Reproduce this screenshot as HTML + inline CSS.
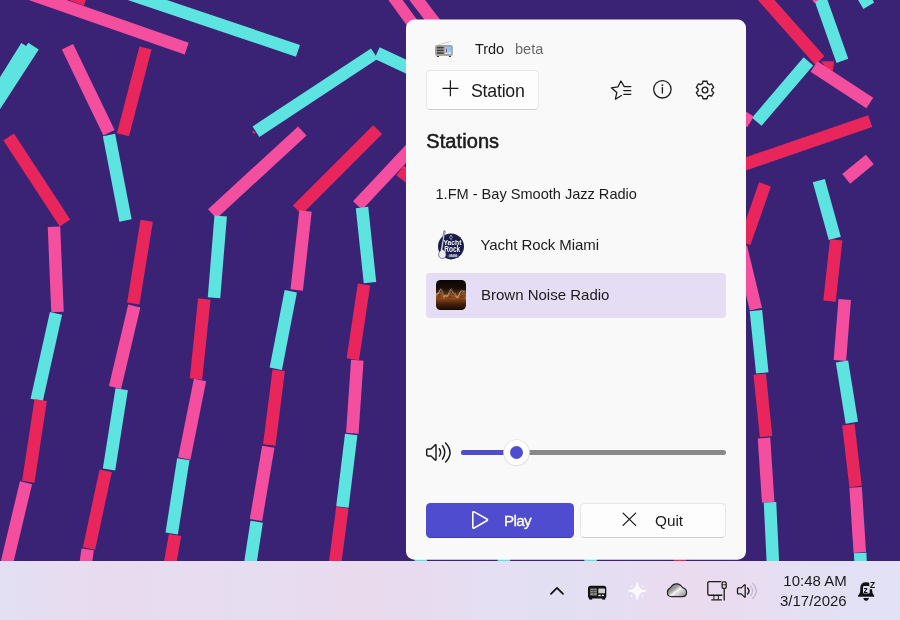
<!DOCTYPE html>
<html><head><meta charset="utf-8"><title>Trdo</title>
<style>
html,body{margin:0;padding:0;}
body{width:900px;height:620px;overflow:hidden;position:relative;background:#3a2375;font-family:"Liberation Sans",sans-serif;color:#1b1b1b;}
#bg{position:absolute;left:0;top:0;}
#panel{position:absolute;left:406px;top:20px;width:340px;height:540px;border-radius:8px;background:#f9f9f9;}
.t{position:absolute;white-space:nowrap;line-height:20px;}
#ui{position:absolute;left:0;top:0;width:900px;height:620px;will-change:transform;}
.btn{position:absolute;box-sizing:border-box;border-radius:4.5px;}
.btn.w{background:#fdfdfd;border:1px solid #e6e6e6;border-bottom-color:#d0d0d0;}
#taskbar{position:absolute;left:0;top:561px;width:900px;height:59px;background:linear-gradient(90deg,#e3e0f3 0px,#e4def2 25px,#e9dbef 100px,#e7dcf0 200px,#e6ddf1 250px,#eadaee 350px,#e8dbef 420px,#e4dff2 480px,#e3dff3 560px,#e5def2 620px,#ebdbef 680px,#e9dcf0 740px,#e4e0f4 800px,#e2e1f5 900px);}
svg{position:absolute;overflow:visible;}
</style></head><body>
<svg id="bg" width="900" height="620" viewBox="0 0 900 620">
<rect width="900" height="620" fill="#3a2375"/>
<line x1="55" y1="-12" x2="86" y2="0" stroke="#e8265b" stroke-width="12.5"/>
<line x1="19" y1="-10" x2="186.7" y2="48.7" stroke="#f44e9f" stroke-width="12.5"/>
<line x1="117.6" y1="-10" x2="298" y2="50.8" stroke="#5de4e0" stroke-width="12.5"/>
<line x1="26.6" y1="46.3" x2="-10.3" y2="105.8" stroke="#5de4e0" stroke-width="12.5"/>
<line x1="33.5" y1="46.2" x2="-10" y2="113.2" stroke="#5de4e0" stroke-width="12.5"/>
<line x1="67.5" y1="46.7" x2="109" y2="132.7" stroke="#f44e9f" stroke-width="12.5"/>
<line x1="145.5" y1="48" x2="123" y2="134.7" stroke="#e8265b" stroke-width="12.5"/>
<line x1="109" y1="135" x2="125.5" y2="220.5" stroke="#5de4e0" stroke-width="12.5"/>
<line x1="8.7" y1="137" x2="65" y2="223" stroke="#e8265b" stroke-width="12.5"/>
<line x1="252.6" y1="131.2" x2="255" y2="133.2" stroke="#e8265b" stroke-width="2"/>
<line x1="256" y1="131.7" x2="374.4" y2="53.6" stroke="#5de4e0" stroke-width="12.5"/>
<line x1="377" y1="53" x2="425" y2="75.5" stroke="#5de4e0" stroke-width="12.5"/>
<line x1="212.3" y1="213.8" x2="302.3" y2="131" stroke="#f44e9f" stroke-width="12.5"/>
<line x1="386.8" y1="-12" x2="418.8" y2="32" stroke="#f44e9f" stroke-width="11.5"/>
<line x1="408" y1="-12" x2="442.5" y2="33" stroke="#f44e9f" stroke-width="12.5"/>
<line x1="54" y1="226.7" x2="57.5" y2="312" stroke="#f44e9f" stroke-width="12.5"/>
<line x1="56" y1="313.3" x2="36.7" y2="400" stroke="#5de4e0" stroke-width="12.5"/>
<line x1="40.7" y1="400" x2="28.3" y2="481.7" stroke="#e8265b" stroke-width="12.5"/>
<line x1="26" y1="482.7" x2="4" y2="575" stroke="#f44e9f" stroke-width="12.5"/>
<line x1="146.7" y1="220.7" x2="133.3" y2="303.5" stroke="#e8265b" stroke-width="12.5"/>
<line x1="134.3" y1="306" x2="115" y2="387.5" stroke="#f44e9f" stroke-width="12.5"/>
<line x1="121.7" y1="389.3" x2="109" y2="469.5" stroke="#5de4e0" stroke-width="12.5"/>
<line x1="105.7" y1="470.7" x2="89" y2="548.5" stroke="#e8265b" stroke-width="12.5"/>
<line x1="87.7" y1="549.3" x2="84" y2="575" stroke="#f44e9f" stroke-width="12.5"/>
<line x1="220.7" y1="216" x2="214" y2="297.7" stroke="#5de4e0" stroke-width="12.5"/>
<line x1="204.3" y1="299" x2="196" y2="379" stroke="#e8265b" stroke-width="12.5"/>
<line x1="200" y1="380" x2="184.3" y2="458.5" stroke="#f44e9f" stroke-width="12.5"/>
<line x1="183.3" y1="459.3" x2="171.7" y2="533.5" stroke="#5de4e0" stroke-width="12.5"/>
<line x1="175" y1="535" x2="168" y2="575" stroke="#e8265b" stroke-width="12.5"/>
<line x1="297.3" y1="210" x2="377.7" y2="129.7" stroke="#e8265b" stroke-width="12.5"/>
<line x1="305.5" y1="211" x2="296.7" y2="290" stroke="#f44e9f" stroke-width="12.5"/>
<line x1="290.8" y1="291.3" x2="275.8" y2="368.7" stroke="#5de4e0" stroke-width="12.5"/>
<line x1="278.7" y1="370.3" x2="269.3" y2="445" stroke="#e8265b" stroke-width="12.5"/>
<line x1="268.3" y1="446.7" x2="256" y2="520" stroke="#f44e9f" stroke-width="12.5"/>
<line x1="256.7" y1="521.7" x2="248.5" y2="575" stroke="#5de4e0" stroke-width="12.5"/>
<line x1="400" y1="170.5" x2="440" y2="199.6" stroke="#e8265b" stroke-width="12.5"/>
<line x1="357.6" y1="205.5" x2="420" y2="139" stroke="#f44e9f" stroke-width="12.5"/>
<line x1="362" y1="207.5" x2="370" y2="282.7" stroke="#5de4e0" stroke-width="12.5"/>
<line x1="364" y1="284.5" x2="352.8" y2="359.2" stroke="#e8265b" stroke-width="12.5"/>
<line x1="357.3" y1="360.3" x2="352.3" y2="433.3" stroke="#f44e9f" stroke-width="12.5"/>
<line x1="351.2" y1="434.5" x2="342.4" y2="507" stroke="#5de4e0" stroke-width="12.5"/>
<line x1="342.4" y1="507.6" x2="333.5" y2="575" stroke="#e8265b" stroke-width="12.5"/>
<line x1="756.4" y1="-11" x2="819.8" y2="60.5" stroke="#e8265b" stroke-width="12.5"/>
<polygon points="821,61.3 834,61.3 833,70.7 828,70" fill="#e8265b"/>
<line x1="820.5" y1="-1" x2="842.4" y2="60.8" stroke="#5de4e0" stroke-width="12.5"/>
<line x1="812" y1="-12" x2="819.5" y2="-0.5" stroke="#f44e9f" stroke-width="12.5"/>
<line x1="858.5" y1="-11.4" x2="868.8" y2="5.7" stroke="#5de4e0" stroke-width="12.5"/>
<line x1="808.4" y1="61.4" x2="756.8" y2="121.7" stroke="#5de4e0" stroke-width="12.5"/>
<line x1="814" y1="66.5" x2="869.8" y2="103.1" stroke="#f44e9f" stroke-width="12.5"/>
<line x1="725" y1="106" x2="750.5" y2="121.9" stroke="#f44e9f" stroke-width="12.5"/>
<line x1="725" y1="171" x2="870.2" y2="121.2" stroke="#e8265b" stroke-width="12.5"/>
<line x1="846.2" y1="178.8" x2="869.8" y2="159.5" stroke="#f44e9f" stroke-width="12.5"/>
<line x1="765" y1="184.4" x2="744.5" y2="243" stroke="#e8265b" stroke-width="12.5"/>
<line x1="741" y1="247" x2="755.9" y2="309.1" stroke="#f44e9f" stroke-width="12.5"/>
<line x1="818.8" y1="180.7" x2="834.8" y2="238.3" stroke="#5de4e0" stroke-width="12.5"/>
<line x1="836.2" y1="239.9" x2="829.5" y2="301.1" stroke="#e8265b" stroke-width="12.5"/>
<line x1="844.7" y1="299.5" x2="839.9" y2="360.4" stroke="#f44e9f" stroke-width="12.5"/>
<line x1="842" y1="361.6" x2="851.8" y2="422.7" stroke="#5de4e0" stroke-width="12.5"/>
<line x1="848.4" y1="424.7" x2="855.6" y2="486.5" stroke="#e8265b" stroke-width="12.5"/>
<line x1="855.6" y1="487.3" x2="859.8" y2="552.5" stroke="#f44e9f" stroke-width="12.5"/>
<line x1="860.2" y1="553" x2="861" y2="575" stroke="#5de4e0" stroke-width="12.5"/>
<line x1="755.9" y1="310.6" x2="762.3" y2="372.9" stroke="#5de4e0" stroke-width="12.5"/>
<line x1="759.7" y1="374.2" x2="766.1" y2="436.6" stroke="#e8265b" stroke-width="12.5"/>
<line x1="764" y1="438" x2="768.2" y2="502.2" stroke="#f44e9f" stroke-width="12.5"/>
<line x1="770" y1="502.3" x2="773.5" y2="575" stroke="#5de4e0" stroke-width="12.5"/>
<line x1="420" y1="540" x2="421.5" y2="575" stroke="#5de4e0" stroke-width="12.5"/>
<line x1="503" y1="540" x2="504.5" y2="575" stroke="#5de4e0" stroke-width="12.5"/>
<line x1="590" y1="540" x2="591" y2="575" stroke="#5de4e0" stroke-width="12.5"/>
<line x1="679" y1="540" x2="680.5" y2="575" stroke="#e8265b" stroke-width="12.5"/>
</svg>
<div id="ui">
<svg style="left:0;top:0" width="900" height="620" viewBox="0 0 900 620"><rect x="406" y="19.4" width="340" height="540.3" rx="8.5" fill="#f9f9f9"/></svg>

<!-- title -->
<svg style="left:435px;top:40px" width="19" height="18" viewBox="0 0 19 18">
<line x1="3.4" y1="4.7" x2="15.8" y2="1.5" stroke="#c4c2c0" stroke-width="0.8"/>
<rect x="1.9" y="15.4" width="2.1" height="1.6" rx="0.5" fill="#3a3837"/><rect x="13.9" y="15.4" width="2.1" height="1.6" rx="0.5" fill="#3a3837"/>
<rect x="0" y="5" width="17.9" height="10.9" rx="2" fill="#a7a4a2"/>
<rect x="1.9" y="6.7" width="6.7" height="7.2" fill="#8b9089"/>
<rect x="1.9" y="6.9" width="6.7" height="1.3" fill="#3d3b3b"/><rect x="1.9" y="9.8" width="6.7" height="1.1" fill="#3d3b3b"/><rect x="1.9" y="12.4" width="6.7" height="1.4" fill="#3d3b3b"/>
<rect x="9.9" y="7.1" width="6.3" height="6.9" rx="0.6" fill="#a3cbee"/>
<circle cx="14.6" cy="9" r="1.5" fill="#7fc0ff"/>
<rect x="11.2" y="8.4" width="0.8" height="4.4" fill="#6b3f7c"/>
<rect x="10.7" y="12.6" width="1.5" height="1.3" fill="#f4f4f4"/><rect x="13.9" y="12.6" width="1.9" height="1.3" fill="#f4f4f4"/>
</svg>
<span class="t" id="trdo" style="left:475px;top:39px;font-size:14.5px;letter-spacing:-0.1px;">Trdo</span>
<span class="t" id="beta" style="left:515px;top:39px;font-size:14.5px;color:#686868;">beta</span>

<!-- add station -->
<div class="btn w" style="left:426px;top:70px;width:112.5px;height:39.5px;"></div>
<svg style="left:442px;top:79.8px" width="17" height="17" viewBox="0 0 17 17"><path d="M8.4 0.3V16.3M0.4 8.3H16.4" stroke="#1b1b1b" stroke-width="1.25" fill="none"/></svg>
<span class="t" id="station" style="left:471px;top:81.3px;font-size:17.8px;letter-spacing:-0.25px;">Station</span>

<!-- icons -->
<svg id="icostar" style="left:609px;top:78px" width="25" height="24" viewBox="0 0 25 24" fill="none" stroke="#1b1b1b" stroke-width="1.3" stroke-linejoin="round" stroke-linecap="round">
<path d="M21.8 8.6 H15.3 L11.9 3 L9 8.8 L2.3 9.8 L7.8 14.6 L6.4 21.2 L12.4 17.5"/>
<path d="M14.8 12.6 H21.8 M14.8 16.3 H21.8"/>
</svg>
<svg id="icoinfo" style="left:652px;top:79.3px" width="21" height="21" viewBox="0 0 21 21" fill="none" stroke="#1b1b1b" stroke-width="1.3">
<circle cx="10.4" cy="10.3" r="8.7"/><path d="M10.4 8.6V14" stroke-linecap="round"/><circle cx="10.4" cy="6.1" r="0.95" fill="#1b1b1b" stroke="none"/>
</svg>
<svg id="icogear" style="left:694px;top:79px" width="22" height="22" viewBox="-11 -11 22 22" fill="none" stroke="#1b1b1b" stroke-width="1.3" stroke-linejoin="round">
<path id="gearpath" d="M-2.47 -6.44 L-2.10 -8.75 L2.10 -8.75 L2.47 -6.44 L4.34 -5.36 L6.53 -6.20 L8.63 -2.56 L6.82 -1.08 L6.82 1.08 L8.63 2.56 L6.53 6.20 L4.34 5.36 L2.47 6.44 L2.10 8.75 L-2.10 8.75 L-2.47 6.44 L-4.34 5.36 L-6.53 6.20 L-8.63 2.56 L-6.82 1.08 L-6.82 -1.08 L-8.63 -2.56 L-6.53 -6.20 L-4.34 -5.36 Z"/>
<circle cx="0" cy="0" r="2.85"/>
</svg>

<span class="t" id="stations" style="left:426.3px;top:128.9px;color:#1b1b1b;font-size:20px;line-height:24px;letter-spacing:0.08px;-webkit-text-stroke:0.55px #1b1b1b;">Stations</span>

<span class="t" id="r1" style="left:435.5px;top:184px;font-size:14.6px;letter-spacing:-0.02px;">1.FM - Bay Smooth Jazz Radio</span>

<!-- yacht rock -->
<svg class="g" style="left:436px;top:229px" width="32" height="32" viewBox="0 0 32 32">
<circle cx="15" cy="17.4" r="13" fill="#1c1c48"/>
<path d="M7.9 1.7 L9.2 2 L6.6 20.6 Q8.6 21.2 9.6 23.2 Q10.8 26 9.4 28.2 Q8 29.8 5.4 29.4 Q2.6 28.8 2.5 26 Q2.6 23 4.6 21.4 L4.8 20.2 Z" fill="#ececf5" stroke="#1c1c48" stroke-width="0.5"/>
<path d="M15 6 L16.3 8.3 L15 10.6 L13.7 8.3 Z" fill="none" stroke="#d8d8ea" stroke-width="0.6"/>
<text x="16.4" y="16.2" font-family="Liberation Sans, sans-serif" font-weight="bold" font-size="6.6" fill="#f4f4fa" text-anchor="middle" textLength="18" lengthAdjust="spacingAndGlyphs">Yacht</text>
<text x="16.2" y="23.4" font-family="Liberation Sans, sans-serif" font-weight="bold" font-size="8.2" fill="#f4f4fa" text-anchor="middle" textLength="16" lengthAdjust="spacingAndGlyphs">Rock</text>
<rect x="11.6" y="25.7" width="11.2" height="2.9" rx="0.5" fill="#4a4a78"/>
<text x="17.2" y="28.1" font-family="Liberation Sans, sans-serif" font-weight="bold" font-size="2.6" fill="#e4e4f2" text-anchor="middle">MIAMI</text>
</svg>
<span class="t" id="r2" style="left:480.5px;top:234.7px;font-size:15px;letter-spacing:-0.08px;">Yacht Rock Miami</span>

<!-- selected row -->
<div style="position:absolute;left:426px;top:273px;width:300px;height:45px;border-radius:4px;background:#e5ddf4;"></div>
<svg style="left:436px;top:280px" width="30" height="30" viewBox="0 0 30 30">
<defs><linearGradient id="bn" x1="0" y1="0" x2="0" y2="1"><stop offset="0" stop-color="#0b0604"/><stop offset="0.28" stop-color="#1a0d07"/><stop offset="0.5" stop-color="#6e3712"/><stop offset="0.62" stop-color="#8a4616"/><stop offset="0.8" stop-color="#47200b"/><stop offset="1" stop-color="#150a06"/></linearGradient>
<clipPath id="bnc"><rect width="30" height="30" rx="4.6"/></clipPath></defs>
<g clip-path="url(#bnc)"><rect width="30" height="30" fill="url(#bn)"/>
<path d="M0.0 17.4 L0.4 16.5 L0.8 16.0 L1.2 16.6 L1.6 15.0 L2.0 15.5 L2.4 15.0 L2.8 13.2 L3.2 13.3 L3.6 13.6 L4.0 14.0 L4.4 15.5 L4.8 15.5 L5.2 16.6 L5.6 16.6 L6.0 18.9 L6.4 17.7 L6.8 18.0 L7.2 18.2 L7.6 18.8 L8.0 17.5 L8.4 18.7 L8.8 17.7 L9.2 17.9 L9.6 17.9 L10.0 16.6 L10.4 17.4 L10.8 16.4 L11.2 15.3 L11.6 16.5 L12.0 14.2 L12.4 14.3 L12.8 14.5 L13.2 13.9 L13.6 13.5 L14.0 14.3 L14.4 14.9 L14.8 16.0 L15.2 14.9 L15.6 16.4 L16.0 15.9 L16.4 16.1 L16.8 17.4 L17.2 16.9 L17.6 17.2 L18.0 17.9 L18.4 18.7 L18.8 18.0 L19.2 18.8 L19.6 18.8 L20.0 18.9 L20.4 19.1 L20.8 18.0 L21.2 17.6 L21.6 16.6 L22.0 17.0 L22.4 15.7 L22.8 15.7 L23.2 15.6 L23.6 13.9 L24.0 14.8 L24.4 15.9 L24.8 15.9 L25.2 14.3 L25.6 14.3 L26.0 15.1 L26.4 14.1 L26.8 14.6 L27.2 14.4 L27.6 16.2 L28.0 17.1 L28.4 18.0 L28.8 17.0 L29.2 19.0 L29.6 19.3 L30.0 18.2" stroke="#a8632f" stroke-width="0.6" fill="none" opacity="0.7"/>
<path d="M0.0 15.1 L0.4 15.6 L0.8 14.1 L1.2 14.8 L1.6 13.8 L2.0 13.2 L2.4 12.5 L2.8 13.4 L3.2 11.6 L3.6 11.6 L4.0 12.0 L4.4 13.4 L4.8 12.4 L5.2 14.1 L5.6 15.2 L6.0 16.8 L6.4 17.3 L6.8 17.8 L7.2 16.7 L7.6 16.9 L8.0 16.7 L8.4 17.7 L8.8 17.8 L9.2 16.0 L9.6 16.2 L10.0 16.4 L10.4 16.4 L10.8 16.8 L11.2 16.7 L11.6 15.3 L12.0 14.0 L12.4 14.0 L12.8 13.0 L13.2 12.7 L13.6 13.2 L14.0 12.5 L14.4 12.4 L14.8 13.1 L15.2 13.8 L15.6 13.1 L16.0 15.5 L16.4 15.7 L16.8 16.1 L17.2 16.1 L17.6 15.3 L18.0 15.5 L18.4 15.1 L18.8 16.7 L19.2 16.0 L19.6 16.5 L20.0 17.3 L20.4 17.4 L20.8 17.8 L21.2 16.7 L21.6 16.0 L22.0 15.4 L22.4 14.4 L22.8 14.0 L23.2 12.6 L23.6 14.0 L24.0 13.3 L24.4 12.3 L24.8 12.7 L25.2 13.1 L25.6 13.3 L26.0 12.9 L26.4 14.5 L26.8 14.7 L27.2 13.6 L27.6 13.7 L28.0 13.2 L28.4 13.8 L28.8 15.1 L29.2 15.8 L29.6 17.9 L30.0 17.1" stroke="#c08e68" stroke-width="0.55" fill="none" opacity="0.7"/>
<path d="M0.0 14.5 L0.4 13.8 L0.8 14.5 L1.2 13.3 L1.6 14.0 L2.0 13.4 L2.4 12.3 L2.8 12.4 L3.2 10.8 L3.6 10.7 L4.0 9.5 L4.4 9.2 L4.8 9.9 L5.2 11.1 L5.6 10.7 L6.0 11.9 L6.4 13.8 L6.8 15.4 L7.2 15.6 L7.6 15.7 L8.0 17.0 L8.4 15.3 L8.8 16.6 L9.2 15.4 L9.6 15.1 L10.0 15.1 L10.4 15.7 L10.8 16.7 L11.2 15.7 L11.6 16.2 L12.0 15.8 L12.4 14.5 L12.8 13.8 L13.2 11.8 L13.6 10.7 L14.0 10.0 L14.4 10.4 L14.8 9.8 L15.2 9.9 L15.6 11.0 L16.0 11.5 L16.4 12.0 L16.8 13.5 L17.2 13.8 L17.6 13.3 L18.0 14.0 L18.4 14.1 L18.8 14.9 L19.2 15.1 L19.6 14.9 L20.0 16.8 L20.4 16.0 L20.8 17.1 L21.2 18.0 L21.6 16.9 L22.0 17.0 L22.4 15.4 L22.8 15.4 L23.2 14.4 L23.6 13.0 L24.0 12.7 L24.4 11.1 L24.8 11.6 L25.2 11.4 L25.6 11.6 L26.0 11.6 L26.4 12.5 L26.8 12.7 L27.2 11.8 L27.6 12.0 L28.0 10.9 L28.4 12.2 L28.8 12.5 L29.2 13.9 L29.6 14.6 L30.0 14.7" stroke="#dcc0a8" stroke-width="0.55" fill="none" opacity="0.75"/>
<path d="M0.0 14.7 L0.4 15.4 L0.8 14.3 L1.2 13.4 L1.6 13.8 L2.0 12.9 L2.4 13.4 L2.8 13.6 L3.2 12.7 L3.6 11.6 L4.0 10.1 L4.4 9.3 L4.8 8.5 L5.2 9.1 L5.6 9.0 L6.0 10.1 L6.4 10.6 L6.8 11.7 L7.2 13.8 L7.6 15.1 L8.0 15.7 L8.4 16.0 L8.8 16.1 L9.2 15.9 L9.6 15.1 L10.0 15.4 L10.4 15.2 L10.8 15.0 L11.2 15.2 L11.6 15.8 L12.0 15.7 L12.4 16.0 L12.8 15.6 L13.2 13.9 L13.6 13.3 L14.0 12.0 L14.4 10.8 L14.8 9.1 L15.2 8.5 L15.6 8.6 L16.0 9.0 L16.4 9.8 L16.8 11.2 L17.2 12.4 L17.6 12.9 L18.0 12.8 L18.4 13.3 L18.8 13.6 L19.2 12.8 L19.6 14.0 L20.0 14.9 L20.4 15.5 L20.8 16.3 L21.2 16.7 L21.6 16.9 L22.0 18.0 L22.4 17.1 L22.8 17.0 L23.2 16.2 L23.6 14.1 L24.0 12.8 L24.4 12.4 L24.8 11.3 L25.2 10.0 L25.6 9.8 L26.0 10.0 L26.4 11.3 L26.8 11.3 L27.2 10.5 L27.6 11.4 L28.0 11.5 L28.4 10.9 L28.8 10.5 L29.2 11.1 L29.6 11.1 L30.0 11.9" stroke="#efe0d2" stroke-width="0.45" fill="none" opacity="0.6"/>
</g></svg>
<span class="t" id="r3" style="left:481px;top:284.6px;font-size:15px;">Brown Noise Radio</span>

<!-- volume -->
<svg id="vol" style="left:425px;top:441px" width="30" height="23" viewBox="0 0 30 23" fill="none" stroke="#1b1b1b" stroke-width="1.45" stroke-linejoin="round" stroke-linecap="round">
<path d="M1.7 9 Q1.7 7.9 2.8 7.9 H6 L10.1 3.9 Q11 3.2 11 4.4 V18.4 Q11 19.6 10.1 18.9 L6 14.9 H2.8 Q1.7 14.9 1.7 13.8 Z"/>
<path d="M14.3 7.7 Q17.1 11.4 14.3 15.1"/>
<path d="M17.5 4.7 Q22.1 11.4 17.5 18.1"/>
<path d="M20.6 1.9 Q29.4 11.5 20.6 21.1"/>
</svg>
<div style="position:absolute;left:461px;top:450px;width:265px;height:5px;border-radius:2.5px;background:#898989;"></div>
<div style="position:absolute;left:461px;top:450px;width:56px;height:5px;border-radius:2.5px;background:#4f4ccf;"></div>
<div style="position:absolute;left:503.8px;top:439.6px;width:25.6px;height:25.6px;border-radius:50%;background:#fefefe;box-shadow:0 0 0 0.8px #e3e3e3,0 1px 1.5px rgba(0,0,0,0.12);"></div>
<div style="position:absolute;left:510px;top:446px;width:13px;height:13px;border-radius:50%;background:#4f4ccf;"></div>

<!-- play / quit -->
<div class="btn" style="left:426px;top:503.3px;width:148px;height:35.2px;background:#4f4ccf;border-bottom:1px solid #3f3ca8;"></div>
<svg style="left:469.5px;top:509px" width="21" height="23" viewBox="0 0 21 23" fill="none" stroke="#ffffff" stroke-width="1.6" stroke-linejoin="round"><path d="M2.8 3.8 Q2.8 2.2 4.2 2.9 L16.8 10 Q18.2 10.9 16.8 11.8 L4.2 19 Q2.8 19.7 2.8 18.2 Z"/></svg>
<span class="t" id="play" style="left:504px;top:510.6px;font-size:15.3px;letter-spacing:-0.7px;color:#fff;-webkit-text-stroke:0.3px #fff;">Play</span>
<div class="btn w" style="left:580px;top:503.3px;width:146px;height:35.2px;"></div>
<svg style="left:621px;top:512px" width="17" height="16" viewBox="0 0 17 16"><path d="M2.1 1.1 L14.6 13.4 M14.6 1.1 L2.1 13.4" stroke="#1b1b1b" stroke-width="1.3" fill="none" stroke-linecap="round"/></svg>
<span class="t" id="quit" style="left:655px;top:510.6px;font-size:15.3px;">Quit</span>

<!-- taskbar -->
<div id="taskbar"></div>
<svg style="left:549px;top:585px" width="16" height="11" viewBox="0 0 16 11"><path d="M2 8.8 L8 2.8 L14 8.8" stroke="#111" stroke-width="1.7" fill="none" stroke-linecap="round" stroke-linejoin="round"/></svg>
<!-- tray radio -->
<svg style="left:587px;top:585px" width="21" height="16" viewBox="0 0 21 16">
<rect x="1" y="0.8" width="18.3" height="12.8" rx="2.6" fill="#131313"/>
<rect x="2.2" y="12.6" width="3" height="2" fill="#131313"/><rect x="15.2" y="12.6" width="3" height="2" fill="#131313"/>
<rect x="3.2" y="3.5" width="6.6" height="7" fill="#8e8e8e"/>
<rect x="3.2" y="5.2" width="6.6" height="0.7" fill="#333"/><rect x="3.2" y="7.4" width="6.6" height="0.7" fill="#333"/><rect x="6.3" y="3.5" width="0.6" height="7" fill="#444"/>
<rect x="11.3" y="3.5" width="6.7" height="4.7" rx="0.5" fill="#cfcfcf"/>
<rect x="11.3" y="9.7" width="2.4" height="1.5" fill="#e8e8e8"/><rect x="14.8" y="9.7" width="2.1" height="1.5" fill="#e8e8e8"/>
</svg>
<!-- sparkle -->
<svg style="left:627px;top:581px" width="21" height="21" viewBox="0 0 21 21" fill="#ffffff" fill-opacity="0.8" stroke="#ffffff" stroke-width="0.9" stroke-linejoin="round">
<path d="M10.2 1.6 Q10.8 9.2 19 9.8 Q10.8 10.4 10.2 18.6 Q9.6 10.4 1.4 9.8 Q9.6 9.2 10.2 1.6 Z"/>
<circle cx="4.8" cy="5.2" r="0.8" fill="#fff" fill-opacity="1" stroke="none"/><circle cx="15.4" cy="5.2" r="0.8" fill="#fff" fill-opacity="1" stroke="none"/><circle cx="4.8" cy="14.9" r="0.8" fill="#fff" fill-opacity="1" stroke="none"/><circle cx="15.4" cy="14.9" r="0.8" fill="#fff" fill-opacity="1" stroke="none"/>
</svg>
<!-- cloud -->
<svg style="left:666px;top:582px" width="22" height="16" viewBox="0 0 22 16">
<defs><linearGradient id="cl" x1="0.1" y1="0.2" x2="0.9" y2="0.9"><stop offset="0" stop-color="#7e7e7e"/><stop offset="0.32" stop-color="#a2a2a2"/><stop offset="0.5" stop-color="#f2f2f2"/><stop offset="0.62" stop-color="#dcdcdc"/><stop offset="1" stop-color="#9a9a9a"/></linearGradient></defs>
<path d="M5.6 14.6 Q1.4 14.6 1.4 10.6 Q1.4 7.2 4.4 5.8 Q6.8 1.6 10.8 1.8 Q14.6 2 16.4 5.6 Q20.6 6.6 20.6 10.6 Q20.4 14.6 16.4 14.6 Z" fill="url(#cl)" stroke="#262626" stroke-width="1.2"/>
</svg>
<!-- monitor -->
<svg style="left:706px;top:579px" width="23" height="23" viewBox="0 0 23 23" fill="none" stroke="#1b1b1b" stroke-width="1.3" stroke-linejoin="round">
<path d="M15.4 2.6 H3.4 Q1.8 2.6 1.8 4.2 V14.7 Q1.8 16.25 3.4 16.25 H16.4"/>
<path d="M7.9 16.3 V20.6 M12.3 16.3 V20.6" stroke-width="1"/>
<path d="M5.3 20.9 H15.8 M18.2 9.6 V21.4"/>
<rect x="16.1" y="2.9" width="4.1" height="6.4" rx="1.3" fill="#ebdcef"/>
<path d="M16.3 5.8 H20" stroke-width="0.9"/>
</svg>
<!-- speaker -->
<svg style="left:735px;top:581px" width="26" height="20" viewBox="0 0 26 20" fill="none" stroke="#1b1b1b" stroke-width="1.3" stroke-linejoin="round" stroke-linecap="round">
<path d="M2.5 7.9 Q2.5 6.9 3.5 6.9 H6.2 L9.4 3.9 Q10.2 3.3 10.2 4.4 V15.4 Q10.2 16.5 9.4 15.9 L6.2 12.9 H3.5 Q2.5 12.9 2.5 11.9 Z"/>
<path d="M12.6 6.9 Q15.4 9.9 12.6 12.9" stroke-width="1.4"/>
<path d="M15.2 4.6 Q20.2 9.9 15.2 15.2" stroke="#c2b9d2" stroke-width="1.1"/>
<path d="M17.5 2.1 Q25.3 9.9 17.5 17.7" stroke="#bfb6cf" stroke-width="1.1"/>
</svg>
<span class="t" id="time" style="right:53.3px;top:571px;font-size:15px;">10:48 AM</span>
<span class="t" id="date" style="right:53.3px;top:590.5px;font-size:15px;">3/17/2026</span>
<!-- bell -->
<svg class="g" style="left:857px;top:580px" width="21" height="22" viewBox="0 0 21 22">
<path d="M1 16.7 L1 15.7 Q3.3 13.8 3.3 10.2 L3.3 8 Q3.3 2.3 9.2 2.3 Q15.1 2.3 15.1 8 L15.1 10.2 Q15.1 13.8 17.2 15.7 L17.2 16.7 Z" fill="#121212"/>
<path d="M6.2 18 H12 Q11.4 20.9 9.1 20.9 Q6.8 20.9 6.2 18 Z" fill="#121212"/>
<rect x="6" y="6.1" width="6.7" height="7.3" rx="1.2" fill="#e3e0f3"/>
<rect x="12.3" y="1.2" width="7" height="8" fill="#e3e0f3"/>
<text x="6.6" y="12.6" font-family="Liberation Sans, sans-serif" font-weight="bold" font-size="8.6" fill="#121212">z</text>
<text x="12.9" y="8.2" font-family="Liberation Sans, sans-serif" font-weight="bold" font-size="8.3" fill="#121212">Z</text>
</svg>
</div>
</body></html>
